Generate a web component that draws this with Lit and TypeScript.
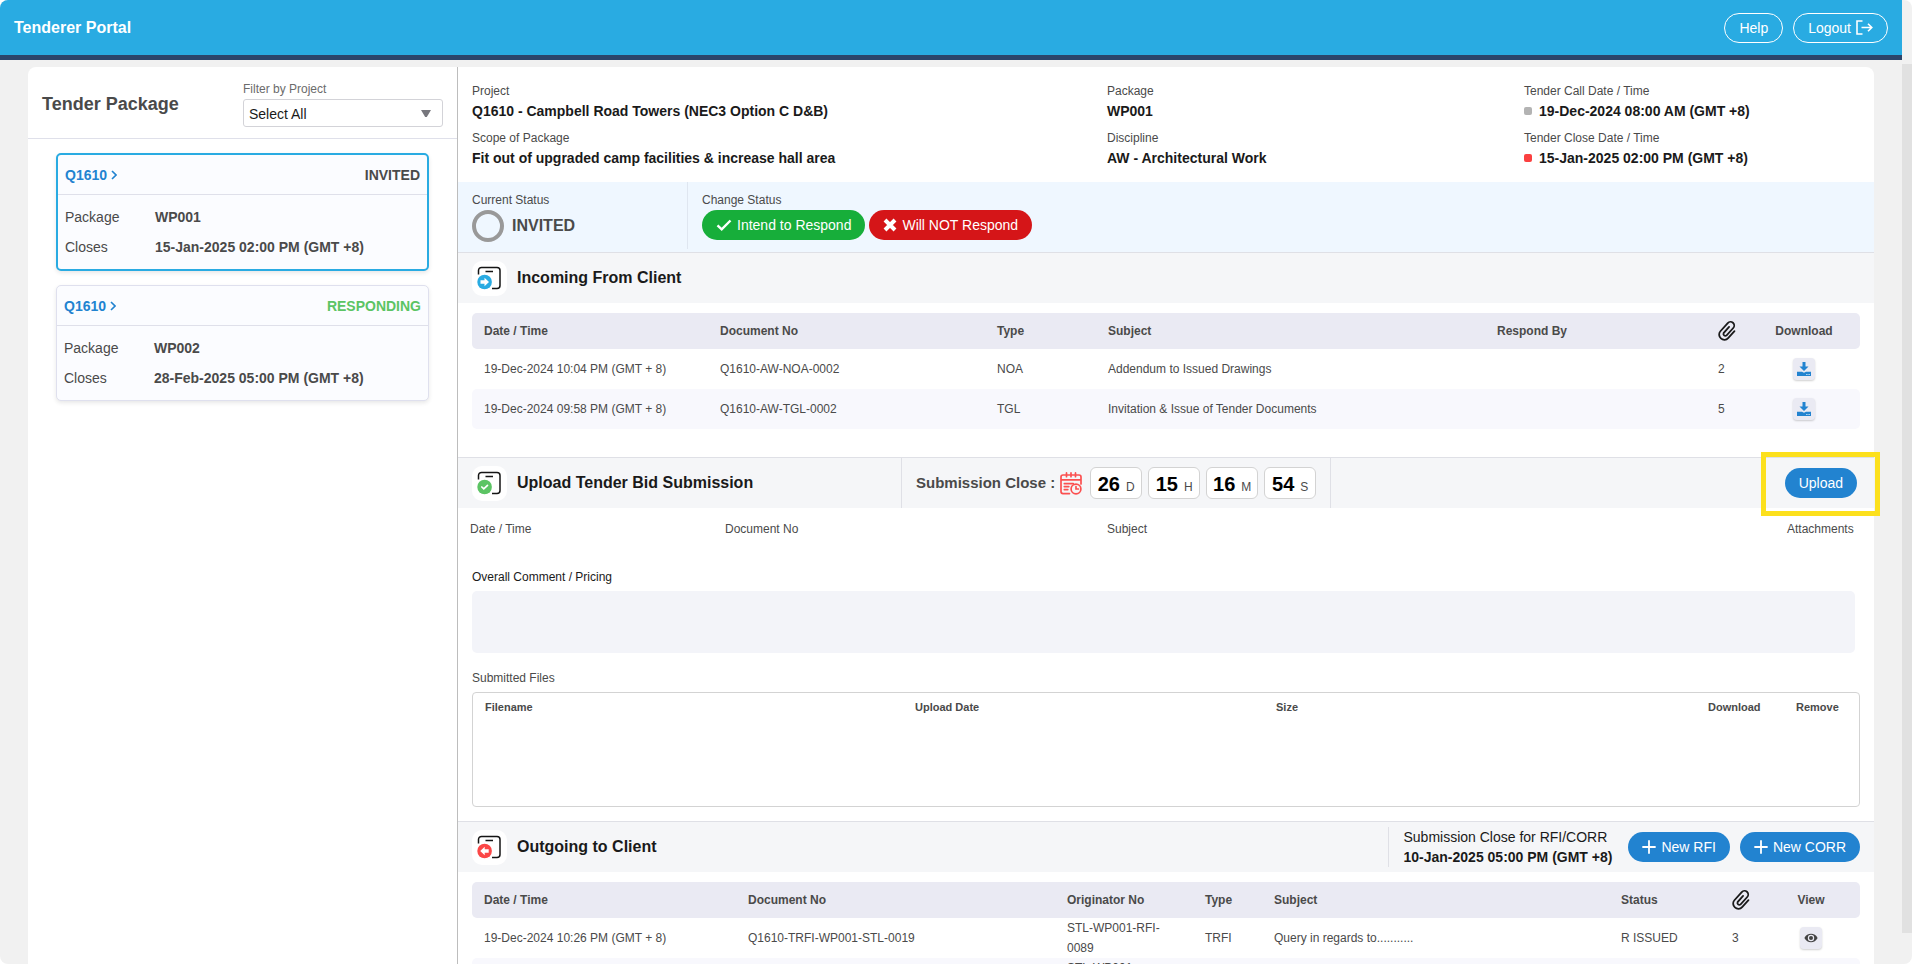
import { LitElement, html, svg, css } from "lit";
import { customElement, state } from "lit/decorators.js";

const clip = html`<svg class="clip" width="20" height="22" viewBox="0 0 20 22" role="img" aria-label="Attachments">
  <path transform="translate(9.600 11) rotate(42)" d="M5.200-4.500V5A5.200 5 0 0 1-5.200 5V-6A3.700 3.700 0 0 1 2.200-6V4.200A2 2 0 0 1-1.600 4.200V-4"
    fill="none" stroke="#1a1a1a" stroke-width="1.800" stroke-linecap="round"/></svg>`;

const download = html`<svg width="14" height="14" viewBox="0 0 14 14" aria-hidden="true">
  <path d="M5.500 0h3v4.500h3L7 9 2.500 4.500h3z" fill="#2283d0"/>
  <path d="M0 9.800h5L7 10.800l2-1H14V14H0z" fill="#2283d0"/>
  <path d="M9.400 12h1v1h-1zM11.600 12h1v1h-1z" fill="#fff"/></svg>`;

const eye = html`<svg width="14" height="12" viewBox="0 0 14 12" aria-hidden="true">
  <path d="M.4 6C3 .4 11 .4 13.600 6 11 11.600 3 11.600.4 6z" fill="#444"/>
  <circle cx="7" cy="6" r="3.200" fill="#eaeaf3"/><circle cx="7" cy="6" r="2" fill="#444"/></svg>`;

const plus = html`<svg width="14" height="14" viewBox="0 0 14 14" aria-hidden="true">
  <path d="M7 1v12M1 7h12" stroke="#fff" stroke-width="1.800" stroke-linecap="round"/></svg>`;

const chevron = html`<svg width="6" height="10" viewBox="0 0 6 10" aria-hidden="true">
  <path d="M1 1l4 4-4 4" fill="none" stroke="currentColor" stroke-width="1.600"/></svg>`;

const marks = {
  in: { fill: "#29abe2", glyph: svg`<path d="M3.500 14.500h4v-2.500l4.500 4.300-4.500 4.300v-2.500h-4z" fill="#fff"/>` },
  done: { fill: "#5cc464", glyph: svg`<path d="M4.800 16.300l2 1.900 3.700-3.600" fill="none" stroke="#fff" stroke-width="1.700" stroke-linecap="round"/>` },
  out: { fill: "#fb4747", glyph: svg`<path d="M11.700 14.500h-4v-2.500l-4.500 4.300 4.500 4.300v-2.500h4z" fill="#fff"/>` },
};

const docIcon = (kind: keyof typeof marks) => html`<span class="badge"><svg width="24" height="24" viewBox="0 0 24 24" aria-hidden="true">
  <path d="M1.500 8.500V4.400a3 3 0 0 1 3-3h15.500a3 3 0 0 1 3 3v15.100a3 3 0 0 1-3 3H15M8.500 5.500h7.500"
    fill="none" stroke="#151515" stroke-width="1.500"/>
  <circle cx="7.600" cy="16" r="7.300" fill=${marks[kind].fill}/><g transform="translate(0 -.3)">${marks[kind].glyph}</g></svg></span>`;

const calendar = html`<svg width="22" height="23" viewBox="0 0 22 23" aria-hidden="true">
  <g fill="none" stroke="#fb5050" stroke-width="1.700" stroke-linecap="round">
  <path d="M9.500 21.600H3a2 2 0 0 1-2-2V5a2 2 0 0 1 2-2h16a2 2 0 0 1 2 2v7M1 7.800h20M6.500.9v3.800M11 .9v3.800M15.500.9v3.800M4.300 11.600h9M4.300 14.600h4.500M4.300 17.600h3.500"/>
  <circle cx="16" cy="17" r="4.900"/><path d="M16 14.600V17h2.400"/></g></svg>`;

interface Pack { id: string; status: string; tone: string; name: string; closes: string; }

@customElement("app-root")
export class AppRoot extends LitElement {
  @state() private selected = 0;

  private packs: Pack[] = [
    { id: "Q1610", status: "INVITED", tone: "grey", name: "WP001", closes: "15-Jan-2025 02:00 PM (GMT +8)" },
    { id: "Q1610", status: "RESPONDING", tone: "green", name: "WP002", closes: "28-Feb-2025 05:00 PM (GMT +8)" },
  ];
  private incoming = [
    ["19-Dec-2024 10:04 PM (GMT + 8)", "Q1610-AW-NOA-0002", "NOA", "Addendum to Issued Drawings", "", "2"],
    ["19-Dec-2024 09:58 PM (GMT + 8)", "Q1610-AW-TGL-0002", "TGL", "Invitation & Issue of Tender Documents", "", "5"],
  ];
  private outgoing = [
    ["19-Dec-2024 10:26 PM (GMT + 8)", "Q1610-TRFI-WP001-STL-0019", "STL-WP001-RFI-0089", "TRFI", "Query in regards to...........", "R ISSUED", "3"],
  ];
  private clock = [["26", "D"], ["15", "H"], ["16", "M"], ["54", "S"]];

  static styles = css`
    :host { display: block; height: 100vh; overflow: hidden; background: #fff; color: #1a1a1a;
      font: 14px/20px "Liberation Sans", Arial, sans-serif; }
    * { box-sizing: border-box; }
    svg { flex: none; }
    button, select, textarea { font: inherit; color: inherit; margin: 0; }
    button { cursor: pointer; border: 0; }
    h1, h2, h3, p, dl, dd { margin: 0; }
    a { color: inherit; text-decoration: none; }
    table { border-collapse: separate; border-spacing: 0; table-layout: fixed; width: 100%; }
    th, td { padding: 0; text-align: left; font-weight: normal; }

    .frame { display: grid; grid-template-columns: minmax(0, 1fr) 10px; height: 100%; border-radius: 8px; overflow: hidden; background: #f1f1f1; }
    .page { display: flex; flex-direction: column; min-height: 0; }
    .rail { padding: 64px 0 31px; }
    .thumb { height: 100%; background: #e1e1e1; }
    .top { flex: none; height: 60px; border-bottom: 5px solid #2b456b; background: #29abe2; color: #fff;
      display: flex; align-items: center; justify-content: space-between; padding: 0 14px; }
    .top h1 { font-size: 16px; }
    .acts { display: flex; align-items: center; gap: 10px; }
    .pill { height: 30px; border-radius: 15px; padding: 0 14px; color: #fff; display: flex; align-items: center; gap: 5px; white-space: nowrap; }
    .line { background: none; border: 1px solid #fff; }
    .blue { background: #2283d0; }
    .ok { background: #17ae3a; }
    .no { background: #d51518; }

    .panel { flex: 1; min-height: 0; margin: 7px 28px 0; display: grid; grid-template-columns: 430px minmax(0, 1fr); }
    .side { background: #fff; border-right: 1px solid #bdbdbd; border-radius: 8px 0 0 0; }
    .sidehead { height: 72px; padding: 12px 14px 10px; border-bottom: 1px solid #dfe0ea; display: flex; justify-content: space-between; }
    .sidehead h2 { font-size: 18px; color: #4a4a4a; align-self: center; }
    .filter { width: 200px; display: flex; flex-direction: column; font-size: 12px; color: #6b6b6b; }
    .pick { display: grid; font-size: 14px; color: #1a1a1a; }
    .pick > * { grid-area: 1 / 1; }
    .pick select { appearance: none; width: 100%; height: 28px; border: 1px solid #d3d3d8; border-radius: 3px; background: #fff; padding: 1px 5px 0; }
    .pick svg { justify-self: end; align-self: center; margin-right: 12px; pointer-events: none; }
    .cards { padding: 14px 28px; display: flex; flex-direction: column; gap: 14px; }
    .card { border: 1px solid #dfe0ee; border-radius: 5px; background: #fbfcff; color: #4a4a4a; box-shadow: 0 2px 4px #00000018; }
    .card.on { border: 2px solid #29abe2; }
    .cardhead { height: 40px; padding: 0 7px; border-bottom: 1px solid #dfe0ea; display: flex; align-items: center; justify-content: space-between; font-weight: bold; }
    .cardhead a { color: #2283d0; display: flex; align-items: center; gap: 4px; }
    .green { color: #5cc464; }
    .card dl { padding: 7px; display: grid; grid-template-columns: 90px 1fr; line-height: 30px; }
    .card dd { font-weight: bold; }

    .main { background: #fff; border-radius: 0 8px 0 0; min-width: 0; }
    .facts { height: 115px; padding: 14px 14px 0; display: grid; grid-template-columns: 635fr 417fr 336fr; grid-auto-rows: 47px; }
    .lbl { font-size: 12px; color: #4a4a4a; }
    .facts b { display: flex; align-items: center; gap: 7px; }
    .dot { width: 8px; height: 8px; border-radius: 2px; background: #b3b3b3; }
    .dot.red { background: #fb4040; }
    .status { height: 70px; background: #eff7ff; display: flex; }
    .now { width: 230px; height: 67px; padding: 8px 14px; border-right: 1px solid #dfe6f0; }
    .now b { display: flex; align-items: center; gap: 8px; font-size: 16px; color: #4a4a4a; }
    .ring { width: 32px; height: 32px; border: 4px solid #999; border-radius: 50%; }
    .change { padding: 8px 14px; }
    .change .acts { gap: 4px; }

    .bar { position: relative; height: 51px; border-top: 1px solid #dfe0e6; background: #f5f6f8; display: flex; align-items: center; padding: 0 14px; }
    .bar h3 { font-size: 16px; }
    .title { display: flex; align-items: center; gap: 10px; }
    .badge { width: 35px; height: 35px; border-radius: 10px; background: #fff; display: flex; align-items: center; padding-left: 5px; }
    .bar.bid { display: grid; grid-template-columns: 429fr 430px 529fr; }
    .bar.bid > .pill { justify-self: end; margin-right: 3px; }
    .timer { height: 50px; display: flex; align-items: center; gap: 5px; white-space: nowrap; border: solid #dfe0e6; border-width: 0 1px; padding: 0 14px; font-size: 15px; font-weight: bold; color: #4a4a4a; }
    .cells { display: flex; gap: 6px; padding-left: 3px; }
    .cell { width: 52px; height: 32px; border: 1px solid #d3d3d3; border-radius: 6px; background: #fff; display: flex; align-items: baseline; justify-content: center; gap: 6px; line-height: 32px; font-size: 12px; font-weight: normal; }
    .cell b { font-size: 20px; color: #000; }
    .mark { position: absolute; top: -6px; right: -6px; width: 119px; height: 64px; border: 5px solid #fce01d; pointer-events: none; }

    .grid { padding: 10px 14px 28px; }
    .grid table { font-size: 12px; color: #4a4a4a; }
    .grid th { height: 36px; background: #eaeaf3; font-weight: bold; }
    .grid td { height: 40px; }
    .grid tr > :first-child { padding-left: 12px; border-radius: 5px 0 0 5px; }
    .grid tr > :last-child { border-radius: 0 5px 5px 0; text-align: center; }
    .grid tbody tr:nth-child(even) td { background: #f8f8fd; }
    .grid td.orig { padding-right: 40px; vertical-align: top; }
    .clip { display: block; }
    .mini { width: 22px; height: 22px; border-radius: 4px; padding: 0; background: #eaeaf3; box-shadow: 0 1px 2px #00000030; display: inline-grid; place-items: center; vertical-align: middle; }

    .bids { padding: 10px 14px 0 12px; font-size: 12px; color: #4a4a4a; }
    .bids th { height: 22px; }
    .entry { padding: 27px 19px 15px 14px; display: flex; flex-direction: column; gap: 4px; font-size: 12px; }
    .entry textarea { height: 62px; border: 0; border-radius: 5px; background: #f3f4f9; resize: none; }
    .sent { padding: 0 14px 14px; display: flex; flex-direction: column; gap: 4px; }
    .files { height: 115px; border: 1px solid #d3d3d3; border-radius: 4px; padding: 4px 0 0 12px; font-size: 11px; color: #4a4a4a; }
    .files th { font-weight: bold; height: 20px; }
    .bar.out { justify-content: space-between; }
    .due { height: 40px; border-left: 1px solid #dfe0e6; padding-left: 15px; margin-right: 6px; }
    .due b { display: block; }
  `;

  private cols(list: number[]) {
    const sum = list.reduce((a, b) => a + b, 0);
    return html`<colgroup>${list.map((w) => html`<col style="width:${(w / sum) * 100}%">`)}</colgroup>`;
  }

  private heads(list: unknown[]) {
    return html`<thead><tr>${list.map((h) => html`<th scope="col">${h}</th>`)}</tr></thead>`;
  }

  private card(p: Pack, i: number) {
    return html`<article class="card ${i === this.selected ? "on" : ""}" @click=${() => (this.selected = i)}>
      <div class="cardhead"><a href="#${p.name}">${p.id}${chevron}</a><span class=${p.tone}>${p.status}</span></div>
      <dl><dt>Package</dt><dd>${p.name}</dd><dt>Closes</dt><dd>${p.closes}</dd></dl>
    </article>`;
  }

  private fact(label: string, value: string, dot = "") {
    return html`<div><p class="lbl">${label}</p><b>${dot ? html`<span class="dot ${dot}"></span>` : ""}${value}</b></div>`;
  }

  render() {
    return html`<div class="frame">
      <div class="page">
        <header class="top"><h1>Tenderer Portal</h1>
          <div class="acts"><button class="pill line">Help</button>
            <button class="pill line">Logout<svg width="17" height="15" viewBox="0 0 17 15" aria-hidden="true"><path d="M6.500 1H1v13h5.500M5.500 7.500h10M12 3.700l3.800 3.800-3.800 3.800" fill="none" stroke="#fff" stroke-width="1.600"/></svg></button></div>
        </header>
        <div class="panel">
          <aside class="side">
            <div class="sidehead"><h2>Tender Package</h2>
              <div class="filter"><label for="project">Filter by Project</label>
                <div class="pick"><select id="project"><option>Select All</option></select>
                  <svg width="10" height="7" viewBox="0 0 10 7" aria-hidden="true"><path d="M0 0h10L5.800 7H4.200z" fill="#77777d"/></svg></div></div></div>
            <div class="cards">${this.packs.map((p, i) => this.card(p, i))}</div>
          </aside>
          <main class="main">
            <section class="facts">
              ${this.fact("Project", "Q1610 - Campbell Road Towers (NEC3 Option C D&B)")}
              ${this.fact("Package", "WP001")}
              ${this.fact("Tender Call Date / Time", "19-Dec-2024 08:00 AM (GMT +8)", "grey")}
              ${this.fact("Scope of Package", "Fit out of upgraded camp facilities & increase hall area")}
              ${this.fact("Discipline", "AW - Architectural Work")}
              ${this.fact("Tender Close Date / Time", "15-Jan-2025 02:00 PM (GMT +8)", "red")}
            </section>
            <section class="status">
              <div class="now"><p class="lbl">Current Status</p><b><span class="ring"></span>INVITED</b></div>
              <div class="change"><p class="lbl">Change Status</p><div class="acts">
                <button class="pill ok"><svg width="16" height="12" viewBox="0 0 16 12" aria-hidden="true"><path d="M1.500 6.300l4.200 4L14.500 1.500" fill="none" stroke="#fff" stroke-width="2.400"/></svg>Intend to Respond</button>
                <button class="pill no"><svg width="14" height="14" viewBox="0 0 14 14" aria-hidden="true"><path d="M2 2l10 10M12 2L2 12" stroke="#fff" stroke-width="4"/></svg>Will NOT Respond</button>
              </div></div>
            </section>

            <header class="bar"><div class="title">${docIcon("in")}<h3>Incoming From Client</h3></div></header>
            <div class="grid"><table>${this.cols([248, 277, 111, 389, 221, 30, 112])}
              ${this.heads(["Date / Time", "Document No", "Type", "Subject", "Respond By", clip, "Download"])}
              <tbody>${this.incoming.map((r) => html`<tr>${r.map((c) => html`<td>${c}</td>`)}
                <td><button class="mini" aria-label="Download">${download}</button></td></tr>`)}</tbody>
            </table></div>

            <header class="bar bid"><div class="title">${docIcon("done")}<h3>Upload Tender Bid Submission</h3></div>
              <div class="timer">Submission Close :${calendar}<div class="cells">${this.clock.map(([n, u]) => html`<span class="cell"><b>${n}</b>${u}</span>`)}</div></div>
              <button class="pill blue">Upload</button><span class="mark"></span></header>
            <div class="bids"><table>${this.cols([255, 382, 680, 73])}
              ${this.heads(["Date / Time", "Document No", "Subject", "Attachments"])}</table></div>
            <div class="entry"><label for="comment">Overall Comment / Pricing</label><textarea id="comment"></textarea></div>
            <div class="sent"><p class="lbl">Submitted Files</p>
              <div class="files"><table>${this.cols([430, 361, 432, 88, 63])}
                ${this.heads(["Filename", "Upload Date", "Size", "Download", "Remove"])}</table></div></div>

            <header class="bar out"><div class="title">${docIcon("out")}<h3>Outgoing to Client</h3></div>
              <div class="acts"><div class="due">Submission Close for RFI/CORR<b>10-Jan-2025 05:00 PM (GMT +8)</b></div>
                ${["New RFI", "New CORR"].map((t) => html`<button class="pill blue">${plus}${t}</button>`)}</div></header>
            <div class="grid"><table>${this.cols([276, 319, 138, 69, 347, 111, 30, 98])}
              ${this.heads(["Date / Time", "Document No", "Originator No", "Type", "Subject", "Status", clip, "View"])}
              <tbody>${this.outgoing.map((r) => html`<tr>${r.map((c, i) => html`<td class=${i === 2 ? "orig" : ""}>${c}</td>`)}
                <td><button class="mini" aria-label="View">${eye}</button></td></tr>`)}
                <tr><td></td><td></td><td class="orig">STL-WP001-</td><td></td><td></td><td></td><td></td><td></td></tr></tbody>
            </table></div>
          </main>
        </div>
      </div>
      <div class="rail" aria-hidden="true"><div class="thumb"></div></div>
    </div>`;
  }
}
